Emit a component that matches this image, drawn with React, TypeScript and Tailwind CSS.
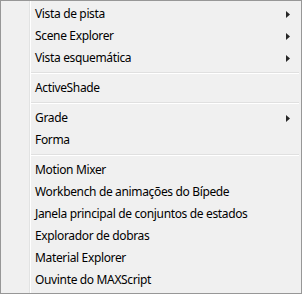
type Item = { label: string; sub?: boolean } | "sep";

const items: Item[] = [
  { label: "Vista de pista", sub: true },
  { label: "Scene Explorer", sub: true },
  { label: "Vista esquemática", sub: true },
  "sep",
  { label: "ActiveShade" },
  "sep",
  { label: "Grade", sub: true },
  { label: "Forma" },
  "sep",
  { label: "Motion Mixer" },
  { label: "Workbench de animações do Bípede" },
  { label: "Janela principal de conjuntos de estados" },
  { label: "Explorador de dobras" },
  { label: "Material Explorer" },
  { label: "Ouvinte do MAXScript" },
];

export default function App() {
  return (
    <div className="w-[302px] h-[294px] border border-[#979797] bg-[#f0f0f0] flex font-['Noto_Sans',sans-serif] text-[12px] tracking-[-0.35px] text-black">
      <div className="w-[28px] shrink-0" />
      <div className="w-px bg-[#e2e3e3]" />
      <div className="w-px bg-white" />
      <div className="flex-1 flex flex-col py-[2px]">
        {items.map((it, i) =>
          it === "sep" ? (
            <div key={i} className="h-[8px] flex flex-col justify-center pr-[2px]">
              <div className="h-px bg-[#e0e0e0]" />
              <div className="h-px bg-white" />
            </div>
          ) : (
            <div key={i} className="h-[22px] flex items-center justify-between pl-[4px] pr-[11px]">
              <span>{it.label}</span>
              {it.sub && (
                <svg width="4" height="7" viewBox="0 0 4 7">
                  <path d="M0 0 L4 3.5 L0 7 Z" fill="#262626" />
                </svg>
              )}
            </div>
          )
        )}
      </div>
    </div>
  );
}
